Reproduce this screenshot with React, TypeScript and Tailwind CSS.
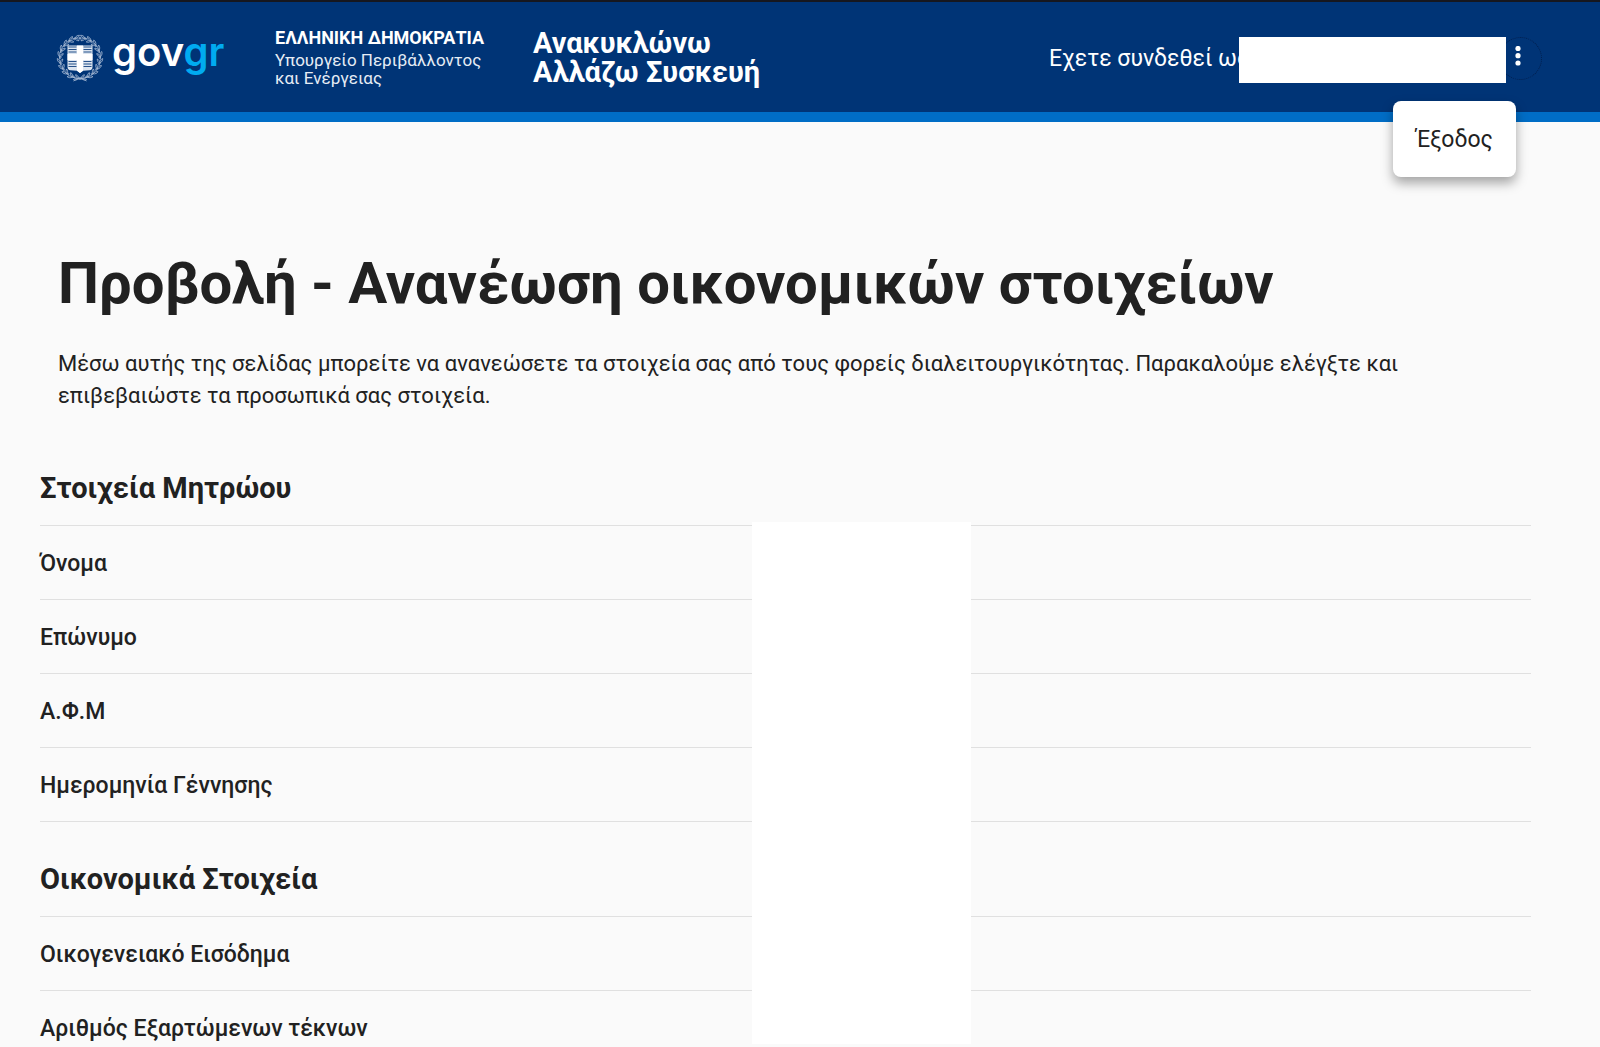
type Section = { title: string; rows: string[] };

const sections: Section[] = [
  { title: "Στοιχεία Μητρώου", rows: ["Όνομα", "Επώνυμο", "Α.Φ.Μ", "Ημερομηνία Γέννησης"] },
  { title: "Οικονομικά Στοιχεία", rows: ["Οικογενειακό Εισόδημα", "Αριθμός Εξαρτώμενων τέκνων"] },
];

const leaves = Array.from({ length: 20 }, (_, i) => 9 + i * 18);
const stripes = [13, 15.5, 18, 27.5, 30, 32.5];

function Emblem() {
  return (
    <svg viewBox="0 0 48 48" className="size-12 shrink-0" aria-hidden="true" fill="none">
      <g stroke="#a4b7d2" strokeWidth="0.8">
        {leaves.map((a) => (
          <g key={a} transform={a < 180 ? `rotate(${a} 24 24)` : `rotate(${a} 24 24) translate(48 0) scale(-1 1)`}>
            <path d="M26 3.500c-1.500-1.800-3.300-2.300-5-2 .8 1.700 2.600 2.500 5 2Z" />
            <path d="M26 3.500c-1.700.2-3.200 1.400-3.700 3.300 1.900-.2 3.300-1.400 3.700-3.300Z" />
            <path d="M28.500 4.200l-2.500-.7" />
            <circle cx="20.500" cy="4.600" r="0.7" />
          </g>
        ))}
        <path d="M17 43l7 2.500 7-2.500M17.500 47l6.500-3.500 6.500 3.500" />
      </g>
      <path d="M11.500 11.500h25V33c0 2-1 3-3 3.200l-6.500.5-3 2.300-3-2.300-6.500-.5c-2-.2-3-1.200-3-3.200Z" fill="#dbe4ef" />
      <g stroke="#27528b" strokeWidth="1.200">
        {stripes.map((y) => (
          <path key={y} d={`M12.500 ${y}h8M27.500 ${y}h8`} />
        ))}
      </g>
      <path d="M21 11.500h6v8.500h9.500v6H27v10.700L24 39l-3-2.300V26h-9.500v-6H21z" fill="#fff" />
    </svg>
  );
}

function Header() {
  return (
    <header className="flex h-[122px] items-center border-t-2 border-b-10 border-t-[#16171f] border-b-[#006dc6] bg-[#003476] pt-0.5 pr-[58px] pl-14 text-white">
      <a href="#" className="flex items-center gap-2" aria-label="govgr">
        <Emblem />
        <span className="w-28 pb-3 font-[Inter] text-[40px] leading-[48px] font-semibold">
          gov<span className="text-[#00abf0]">gr</span>
        </span>
      </a>
      <div className="ml-[51px] w-[258px] shrink-0 text-[17px] leading-[18px] text-[#e6edf5]">
        <p className="mb-1 text-[18px] font-bold text-white">ΕΛΛΗΝΙΚΗ ΔΗΜΟΚΡΑΤΙΑ</p>
        <p>Υπουργείο Περιβάλλοντος</p>
        <p>και Ενέργειας</p>
      </div>
      <p className="text-[29px] leading-[29px] font-bold whitespace-nowrap">
        Ανακυκλώνω
        <br />
        Αλλάζω Συσκευή
      </p>
      <div className="relative ml-auto flex w-[493px] shrink-0 items-center">
        <p className="pt-0.5 text-[23px] leading-8 whitespace-nowrap">Εχετε συνδεθεί ως</p>
        <button
          type="button"
          aria-label="Μενού χρήστη"
          aria-expanded="true"
          className="ml-auto flex size-[43px] items-center justify-center rounded-full border border-dotted border-[#001f4d]"
        >
          <svg viewBox="0 0 24 24" className="size-6" fill="currentColor" aria-hidden="true">
            <circle cx="9" cy="2.500" r="2.600" />
            <circle cx="9" cy="9.700" r="2.600" />
            <circle cx="9" cy="17" r="2.600" />
          </svg>
        </button>
        <div className="absolute top-0 right-9 h-[46px] w-[267px] bg-white" />
        <div role="menu" className="absolute top-16 right-[26px] z-10 rounded-lg bg-white px-[23px] pt-[23px] pb-[21px] shadow-[0_6px_12px_rgba(0,0,0,0.35)]">
          <button type="button" role="menuitem" className="block text-[23px] leading-8 text-[#212121]">
            Έξοδος
          </button>
        </div>
      </div>
    </header>
  );
}

export default function App() {
  return (
    <div className="min-h-screen bg-[#fafafa] font-[Roboto,sans-serif] text-[#212121]">
      <Header />
      <main className="pt-[126px] pr-[69px] pl-10">
        <div className="pl-[18px]">
          <h1 className="text-[58px] leading-[70px] font-bold">Προβολή - Ανανέωση οικονομικών στοιχείων</h1>
          <p className="mt-[30px] max-w-[1380px] text-[22px] leading-8">
            Μέσω αυτής της σελίδας μπορείτε να ανανεώσετε τα στοιχεία σας από τους φορείς διαλειτουργικότητας.
            Παρακαλούμε ελέγξτε και επιβεβαιώστε τα προσωπικά σας στοιχεία.
          </p>
        </div>
        <div className="relative mt-[58px]">
          {sections.map((s, i) => (
            <section key={s.title} className={i > 0 ? "mt-[39px]" : ""}>
              <h2 className="pt-px pb-5 text-[29px] leading-[34px] font-bold">{s.title}</h2>
              <dl className={i === 0 ? "border-b border-[#e0e0e0]" : ""}>
                {s.rows.map((r) => (
                  <div
                    key={r}
                    className={
                      i > 0
                        ? "border-t border-[#e0e0e0] pt-6 pb-[21px] last:pb-0"
                        : "border-t border-[#e0e0e0] pt-6 pb-[21px]"
                    }
                  >
                    <dt className="text-[23px] leading-7 font-medium">{r}</dt>
                  </div>
                ))}
              </dl>
            </section>
          ))}
          <div className="absolute top-[52px] left-[712px] h-[522px] w-[219px] bg-white" />
        </div>
      </main>
    </div>
  );
}
